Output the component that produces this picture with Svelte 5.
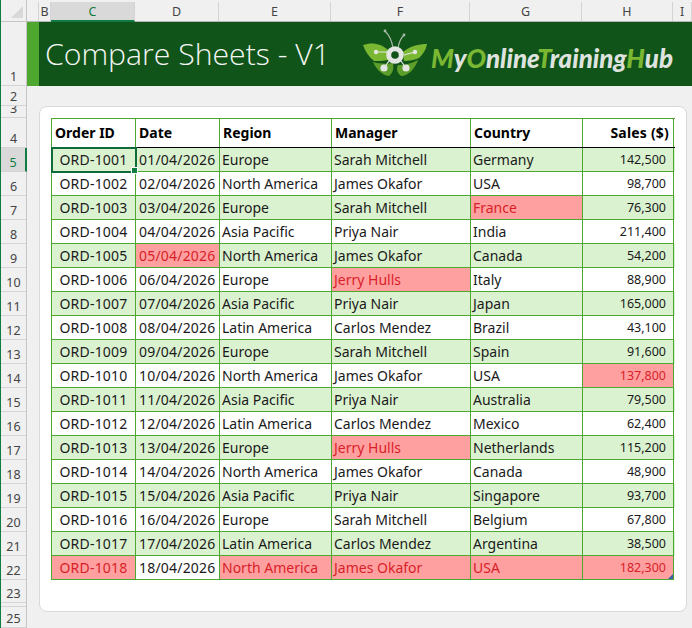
<script>
  const cols = [
    ['B', 12], ['C', 84], ['D', 84], ['E', 112], ['F', 139], ['G', 112], ['H', 91], ['I', 19]
  ];
  const heads = [
    ['1', 64], ['2', 20], ['3', 12], ['4', 30],
    ...Array.from({ length: 18 }, (_, i) => [String(i + 5), 24]),
    ['23', 23], ['24', 4], ['25', 21]
  ];
  const data = [
    ['ORD-1001','01/04/2026','Europe','Sarah Mitchell','Germany','142,500'],
    ['ORD-1002','02/04/2026','North America','James Okafor','USA','98,700'],
    ['ORD-1003','03/04/2026','Europe','Sarah Mitchell','France','76,300',[4]],
    ['ORD-1004','04/04/2026','Asia Pacific','Priya Nair','India','211,400'],
    ['ORD-1005','05/04/2026','North America','James Okafor','Canada','54,200',[1]],
    ['ORD-1006','06/04/2026','Europe','Jerry Hulls','Italy','88,900',[3]],
    ['ORD-1007','07/04/2026','Asia Pacific','Priya Nair','Japan','165,000'],
    ['ORD-1008','08/04/2026','Latin America','Carlos Mendez','Brazil','43,100'],
    ['ORD-1009','09/04/2026','Europe','Sarah Mitchell','Spain','91,600'],
    ['ORD-1010','10/04/2026','North America','James Okafor','USA','137,800',[5]],
    ['ORD-1011','11/04/2026','Asia Pacific','Priya Nair','Australia','79,500'],
    ['ORD-1012','12/04/2026','Latin America','Carlos Mendez','Mexico','62,400'],
    ['ORD-1013','13/04/2026','Europe','Jerry Hulls','Netherlands','115,200',[3]],
    ['ORD-1014','14/04/2026','North America','James Okafor','Canada','48,900'],
    ['ORD-1015','15/04/2026','Asia Pacific','Priya Nair','Singapore','93,700'],
    ['ORD-1016','16/04/2026','Europe','Sarah Mitchell','Belgium','67,800'],
    ['ORD-1017','17/04/2026','Latin America','Carlos Mendez','Argentina','38,500'],
    ['ORD-1018','18/04/2026','North America','James Okafor','USA','182,300',[0,2,3,4,5]]
  ];
  const titles = ['Order ID','Date','Region','Manager','Country','Sales ($)'];
</script>

<div class="sheet">
  <div class="rowbar">
    <div class="corner"><span class="tri"></span></div>
    {#each heads as [n, h]}
      <div class="rh" class:on={n === '5'} style="height:{h}px"><span>{n}</span></div>
    {/each}
  </div>
  <div class="main">
    <div class="colbar">
      <div class="ch a"></div>
      {#each cols as [c, w]}
        <div class="ch" class:on={c === 'C'} style="width:{w}px">{c}</div>
      {/each}
    </div>
    <header class="banner">
      <div class="stripe"></div>
      <h1>Compare Sheets - V1</h1>
      <div class="logo">
        <svg width="90" height="62" viewBox="0 0 90 62" aria-hidden="true">
          <path d="M38 25 C37 18 34 12 30 8" class="ant"/>
          <path d="M43 25 C44 19 46 15 49 12" class="ant"/>
          <circle cx="30" cy="8" r="1.4" fill="#a9bcac"/>
          <circle cx="49" cy="12" r="1.4" fill="#a9bcac"/>
          <path d="M8 22 C16 19 26 20 33 27 L33 37 C28 38 24 38 19 38 C14 34 10 28 8 22Z" fill="#7ab833"/>
          <path d="M72 21 C64 21 55 23 48 29 L49 38 C54 38 60 37 64 35 C68 31 71 27 72 21Z" fill="#7ab833"/>
          <path d="M18 39 C25 41 32 41 38 40 C39 45 38 50 34 53 C27 52 21 46 18 39Z" fill="#5d9e2a"/>
          <path d="M63 37 C56 41 49 42 43 42 C41 46 42 50 46 53 C53 53 60 46 63 37Z" fill="#5d9e2a"/>
          <path d="M21 29 H32 M49 32 L60 29 M34 38 L29 45 M46 38 L51 45" stroke="#e4e6e4" stroke-width="1.2" fill="none"/>
          <circle cx="21" cy="29" r="2.2" fill="#e4e6e4"/>
          <circle cx="60" cy="29" r="2.2" fill="#e4e6e4"/>
          <circle cx="29" cy="45" r="3.6" fill="#e4e6e4"/>
          <circle cx="51" cy="45" r="3.6" fill="#e4e6e4"/>
          <circle cx="40" cy="32" r="6.3" fill="#115419" stroke="#e4e6e4" stroke-width="5"/>
        </svg>
        <span class="brand"><b>M</b>y<b>O</b>nline<b>T</b>raining<b>H</b>ub</span>
      </div>
    </header>
    <div class="canvas">
      <section class="card">
        <div class="table">
          <div class="row head">
            {#each titles as t, i}
              <div class="cell c{i}">{t}</div>
            {/each}
          </div>
          {#each data as r, ri}
            <div class="row" class:odd={ri % 2 === 0}>
              {#each r.slice(0, 6) as v, i}
                <div class="cell c{i}" class:bad={r[6]?.includes(i)} class:sel={ri === 0 && i === 0}>
                  {v}
                  {#if ri === 0 && i === 0}<span class="handle"></span>{/if}
                  {#if ri === 17 && i === 5}<span class="resize"></span>{/if}
                </div>
              {/each}
            </div>
          {/each}
        </div>
      </section>
    </div>
  </div>
</div>

<style>
  :global(body) { margin: 0; background: #f0f0f0; }
  .sheet {
    display: flex; width: 692px; height: 628px; overflow: hidden;
    font-family: "Noto Sans", "Open Sans", sans-serif; color: #1a1a1a; background: #f0f0f0;
  }
  .rowbar {
    width: 27px; flex: none; box-sizing: border-box;
    border-left: 1px solid #107c41; border-right: 1px solid #c6c6c6;
  }
  .corner {
    height: 22px; box-sizing: border-box; border-bottom: 1px solid #c6c6c6; position: relative;
  }
  .tri {
    position: absolute; right: 3px; bottom: 3px; width: 0; height: 0;
    border-left: 12px solid transparent; border-bottom: 12px solid #d8d8d8;
  }
  .rh {
    box-sizing: border-box; border-bottom: 1px solid #d4d4d4; display: flex; align-items: flex-end;
    justify-content: center; font-size: 12.5px; line-height: 16px; overflow: hidden; color: #444;
  }
  .rh.on { background: #d9d9d9; color: #107c41; border-right: 2px solid #107c41; margin-right: -1px; }
  .main { flex: 1; min-width: 0; }
  .colbar { display: flex; height: 22px; box-sizing: border-box; padding-top: 2px; border-bottom: 1px solid #b5b5b5; }
  .ch {
    flex: none; box-sizing: border-box; border-right: 1px solid #d4d4d4; text-align: center;
    font-size: 12.5px; line-height: 20px; color: #444;
  }
  .ch.a { width: 12px; }
  .ch.on { background: #d9d9d9; color: #107c41; border-bottom: 2px solid #107c41; height: 20px; }
  .banner { display: flex; height: 64px; background: #115419; align-items: center; }
  .stripe { width: 12px; align-self: stretch; background: #4ea72e; }
  h1 {
    margin: 0 0 0 6px; font: 300 30.2px "Open Sans", "Noto Sans", sans-serif; color: #f3f6f3;
    line-height: 64px; white-space: nowrap; width: 310px;
  }
  .logo { display: flex; align-items: center; height: 64px; }
  .brand {
    font: italic 900 25.9px "Lato", "Open Sans", sans-serif; color: #dfe3df; white-space: nowrap;
    margin-left: -14px; margin-top: 7px;
  }
  .brand b { color: #7ab833; font-weight: 900; }
  .canvas { padding: 20px 0 0 12px; }
  .card {
    box-sizing: border-box; width: 648px; height: 506px; background: #fff;
    border: 1px solid #d9d9d9; border-radius: 8px; padding: 11px 0 0 11px;
  }
  .table { width: 623px; border-top: 1px solid #4ea72e; border-left: 1px solid #4ea72e; }
  .row { display: grid; grid-template-columns: 84px 84px 112px 139px 112px 91px; height: 24px; }
  .row.head { height: 28px; border-bottom: 1px solid #000; }
  .row.odd { background: #daf2d0; }
  .cell {
    box-sizing: border-box; border-right: 1px solid #4ea72e; border-bottom: 1px solid #4ea72e;
    padding: 0 2px; font-size: 14px; line-height: 23px; white-space: nowrap; position: relative; overflow: visible;
  }
  .head .cell { font-weight: 700; color: #000; line-height: 28px; border-bottom: 0; padding: 0 3px; }
  .row:not(.head) .c0 { text-align: center; letter-spacing: 0.2px; }
  .row:not(.head) .c1 { letter-spacing: 0.2px; padding-left: 3px; }
  .c5 { text-align: right; }
  .row:not(.head) .c5 { font-size: 12.5px; padding-right: 7px; }
  .head .c5 { padding-right: 4px; letter-spacing: 0.2px; }
  .bad { background: #ffa0a0; color: #d81e28; }
  .sel { outline: 2px solid #0f6b3a; outline-offset: -1px; z-index: 2; }
  .handle {
    position: absolute; right: -3px; bottom: -3px; width: 5px; height: 5px; background: #107c41;
    border: 1px solid #fff;
  }
  .resize {
    position: absolute; right: 0; bottom: 0; width: 0; height: 0;
    border-left: 5px solid transparent; border-bottom: 5px solid #3f5fa8;
  }
  .ant { stroke: #a9bcac; stroke-width: 1.1; fill: none; }
</style>
